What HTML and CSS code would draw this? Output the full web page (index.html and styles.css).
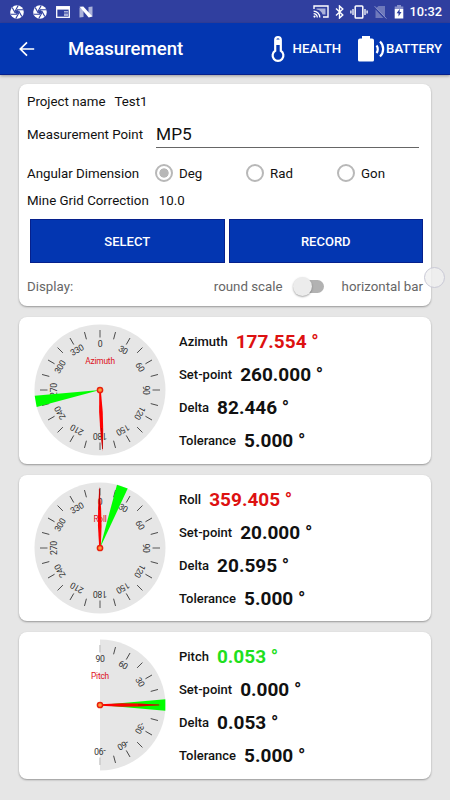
FILE: index.html
```html
<!DOCTYPE html>
<html lang="en">
<head>
  <meta charset="UTF-8" />
  <meta name="viewport" content="width=device-width, initial-scale=1.0"/>
  <title>Measurement</title>
  <link rel="stylesheet" href="styles.css">
</head>
<body>

  <!-- Status bar -->
  <div class="status-bar">
    <div class="status-left">
      <svg width="14" height="14" viewBox="0 0 14 14"><circle cx="7" cy="7" r="6.8" fill="#fff"/><g stroke="#303f9f" stroke-width="1.1"><path d="M5.2 6L8.2 .6M7 4.7h6M8.8 6l3 5.4M8.8 8l-3 5.4M7 9.3H1M5.2 8l-3-5.4"/></g><circle cx="7" cy="7" r="2" fill="#303f9f"/></svg>
      <svg width="14" height="14" viewBox="0 0 14 14"><circle cx="7" cy="7" r="6.8" fill="#fff"/><g stroke="#303f9f" stroke-width="1.1"><path d="M5.2 6L8.2 .6M7 4.7h6M8.8 6l3 5.4M8.8 8l-3 5.4M7 9.3H1M5.2 8l-3-5.4"/></g><circle cx="7" cy="7" r="2" fill="#303f9f"/></svg>
      <svg width="14" height="12" viewBox="0 0 14 12"><rect x=".7" y=".7" width="12.6" height="10.6" fill="none" stroke="#fff" stroke-width="1.3"/><path d="M1 1h12v2.600H1z" fill="#fff"/><path d="M2.600 5h4.200v5H2.600z" fill="#303f9f"/><path d="M8 5h4v1.500H8zM8 7.500h4V10H8z" fill="#a9b0d8"/></svg>
      <svg width="14" height="12" viewBox="0 0 14 12"><path d="M.5 1.500L4.500 4v7L.5 11.500zM9.500 1L13.500 .5v10l-4-2z" fill="#aab1da"/><path d="M.5 .8L4.300 .5l9.200 10-3.800 1z" fill="#fff"/></svg>
    </div>
    <div class="status-right">
      <svg width="16" height="13" viewBox="0 0 16 13"><path d="M1 4V1h14v11h-5" fill="none" stroke="#fff" stroke-width="1.400"/><path d="M3.500 3.500h9v6H9.600C9 7 6.600 4.600 3.500 4.400z" fill="#aab1da"/><path d="M.6 6.200c3.500 0 6.200 2.700 6.200 6.200M.6 8.700c2 0 3.700 1.700 3.700 3.700" fill="none" stroke="#fff" stroke-width="1.300"/><circle cx="1.500" cy="11.600" r="1.100" fill="#fff"/></svg>
      <svg class="bluetooth" width="9" height="14" viewBox="0 0 9 14"><path d="M1 3.600l6.800 6.300L4.500 13V1l3.300 3.100L1 10.400" fill="none" stroke="#fff" stroke-width="1.400"/></svg>
      <svg class="vibrate" width="18" height="14" viewBox="0 0 18 14"><rect x="5.200" y="1" width="7.600" height="12" rx=".8" fill="none" stroke="#fff" stroke-width="1.500"/><path d="M3 4v6M15 4v6M.9 5.500v3M17.100 5.500v3" stroke="#fff" stroke-width="1.300"/></svg>
      <svg class="no-sim" width="13" height="14" viewBox="0 0 13 14"><path d="M2 3.300L4.500 1H11v11zM1.500 4.500L9.500 13h-8z" fill="#6f79bb"/><path d="M.6 1.200L12.400 13.600" stroke="#8a93cb" stroke-width="1"/></svg>
      <svg class="charging" width="10" height="14" viewBox="0 0 10 14"><path d="M3 0h4v1.500h2.300V4H.7V1.500H3z" fill="#8991ca"/><path d="M.7 4h8.600v9.500H.7z" fill="#fff"/><path d="M5.800 3.800L2.600 8.200h1.900v3.300l3-4.600H5.600z" fill="#303f9f"/></svg>
      <span class="clock">10:32</span>
    </div>
  </div>

  <!-- Toolbar -->
  <div class="toolbar">
    <svg class="back" width="16" height="16" viewBox="0 0 16 16"><path d="M15.200 8H1.500M8 1.300L1.300 8 8 14.700" fill="none" stroke="#fff" stroke-width="1.700"/></svg>
    <h1>Measurement</h1>
    <div class="action health">
      <svg width="14" height="26" viewBox="0 0 14 26"><path d="M4.200 14.800V4a2.800 2.800 0 0 1 5.600 0v10.800a5.400 5.400 0 1 1-5.600 0z" fill="none" stroke="#fff" stroke-width="2.200"/><path d="M4.200 3.500h5.600V9H4.200z" fill="#fff"/></svg>
      <span>HEALTH</span>
    </div>
    <div class="action battery">
      <svg width="28" height="26" viewBox="0 0 28 26"><path d="M4 0h8v2.500h2q2 0 2 2V24q0 1.500-1.500 1.500h-13Q0 25.500 0 24V4.500q0-2 2-2h2z" fill="#fff"/><path d="M18.500 9.500c1.700 2 1.700 5.500 0 7.500M22 5.500c4.200 4 4.200 11 0 15" fill="none" stroke="#fff" stroke-width="2.200"/></svg>
      <span>BATTERY</span>
    </div>
  </div>

  <div class="content">
    <!-- Settings -->
    <div class="card settings">
      <div class="row project"><span>Project name</span><span>Test1</span></div>
      <div class="row point"><span>Measurement Point</span><div class="point-input">MP5</div></div>
      <div class="row dimension">
        <span class="dimension-label">Angular Dimension</span>
        <div class="option"><i class="radio checked"></i>Deg</div>
        <div class="option"><i class="radio"></i>Rad</div>
        <div class="option"><i class="radio"></i>Gon</div>
      </div>
      <div class="row grid-correction"><span>Mine Grid Correction</span><span>10.0</span></div>
      <div class="buttons">
        <button>SELECT</button>
        <button>RECORD</button>
      </div>
      <div class="row display">
        <span class="display-label">Display:</span>
        <span>round scale</span>
        <div class="switch"></div>
        <span>horizontal bar</span>
      </div>
      <div class="touch"></div>
    </div>

    <div class="card gauge">
      <svg class="dial" id="azimuth" width="132" height="132" viewBox="-66 -66 132 132"></svg>
      <div class="readings">
        <div class="reading"><span>Azimuth</span><b class="bad">177.554 °</b></div>
        <div class="reading"><span>Set-point</span><b>260.000 °</b></div>
        <div class="reading"><span>Delta</span><b>82.446 °</b></div>
        <div class="reading"><span>Tolerance</span><b>5.000 °</b></div>
      </div>
    </div>

    <div class="card gauge">
      <svg class="dial" id="roll" width="132" height="132" viewBox="-66 -66 132 132"></svg>
      <div class="readings">
        <div class="reading"><span>Roll</span><b class="bad">359.405 °</b></div>
        <div class="reading"><span>Set-point</span><b>20.000 °</b></div>
        <div class="reading"><span>Delta</span><b>20.595 °</b></div>
        <div class="reading"><span>Tolerance</span><b>5.000 °</b></div>
      </div>
    </div>

    <div class="card gauge">
      <svg class="dial" id="pitch" width="132" height="132" viewBox="-66 -66 132 132"></svg>
      <div class="readings">
        <div class="reading"><span>Pitch</span><b class="good">0.053 °</b></div>
        <div class="reading"><span>Set-point</span><b>0.000 °</b></div>
        <div class="reading"><span>Delta</span><b>0.053 °</b></div>
        <div class="reading"><span>Tolerance</span><b>5.000 °</b></div>
      </div>
    </div>
  </div>

  <script>
    // angles are clockwise from the top of the dial
    function drawDial(id, title, value, setPoint, half) {
      let out = half
        ? '<path class="face" d="M0 -65.5A65.5 65.5 0 0 1 0 65.5z"/>'
        : '<circle class="face" r="65.5"/>';
      const last = half ? 180 : 345;

      for (let a = 0; a <= last; a += 15) {
        const edge = half && a % 180 === 0 ? " edge" : "";
        out += `<path class="tick${edge}" d="M0 -60V-52.5" transform="rotate(${a})"/>`;
        if (a % 30 === 0) {
          const text = half ? 90 - a : a;
          out += `<text class="mark" y="-43.2" transform="rotate(${a})">${text}</text>`;
        }
      }

      out += `<text class="title" y="-25.8">${title}</text>`;
      out += `<path class="target" d="M0 0L-5.7 -65.3H5.7z" transform="rotate(${setPoint})"/>`;
      out += `<g transform="rotate(${value})"><path class="needle" d="M-.8 0L-1.8 -22L-1.5 -40L0 -61.5L1.5 -40L1.8 -22L.8 0z"/><path class="needle-line" d="M0 -38V-59"/></g>`;
      out += '<circle class="hub" r="2.6"/>';
      document.getElementById(id).innerHTML = out;
    }

    drawDial("azimuth", "Azimuth", 177.554, 260, false);
    drawDial("roll", "Roll", 359.405, 20, false);
    drawDial("pitch", "Pitch", 90 - 0.053, 90, true);
  </script>
</body>
</html>
```
FILE: styles.css
```css
* {
  box-sizing: border-box;
}

body {
  margin: 0;
  height: 800px;
  overflow: hidden;
  font-family: Roboto, "Liberation Sans", sans-serif;
  font-size: 13.3px;
  color: #111;
  background: #e6e6e6;
}

svg {
  display: block;
  flex: none;
}

.status-bar {
  display: flex;
  justify-content: space-between;
  align-items: center;
  height: 23px;
  padding: 0 8px 0 10px;
  background: #303f9f;
  color: #fff;
}

.status-left,
.status-right {
  display: flex;
  align-items: center;
}

.status-left {
  gap: 9px;
}

.bluetooth {
  margin-left: 6px;
}

.vibrate {
  margin-left: 6px;
}

.no-sim {
  margin-left: 6px;
}

.charging {
  margin-left: 7px;
}

.clock {
  margin-left: 6px;
  font-size: 12.8px;
  font-weight: 500;
}

.toolbar {
  display: flex;
  align-items: center;
  height: 52px;
  padding: 0 8px 0 19px;
  background: #0336b1;
  border-bottom: 1px solid #06208c;
  box-shadow: 0 1px 3px rgba(0, 0, 0, 0.35);
  color: #fff;
}

h1 {
  flex: 1;
  margin: 0 0 0 33px;
  font-size: 18.6px;
  font-weight: 500;
}

.action {
  display: flex;
  align-items: center;
  font-size: 13.2px;
  font-weight: 500;
}

.health {
  gap: 8px;
}

.battery {
  margin-left: 17px;
}

.content {
  display: flex;
  flex-direction: column;
  gap: 11px;
  padding: 9px 19px;
}

.card {
  background: #fff;
  border-radius: 8px;
  box-shadow: 0 1px 2px rgba(0, 0, 0, 0.35);
}

.settings {
  position: relative;
  height: 222px;
  padding: 0 8px;
}

.row {
  display: flex;
  align-items: center;
}

.project {
  height: 34px;
  gap: 9px;
}

.point {
  height: 32px;
  gap: 13px;
}

.point-input {
  flex: 1;
  height: 28px;
  margin-right: 4px;
  border-bottom: 1px solid #666;
  font-size: 17.3px;
  line-height: 28px;
}

.dimension {
  height: 42px;
  padding-top: 4px;
}

.dimension-label {
  flex: none;
  width: 128px;
}

.option {
  display: flex;
  flex: none;
  align-items: center;
  gap: 6px;
  width: 91px;
}

.radio {
  width: 18px;
  height: 18px;
  border: 2px solid #b8b8b8;
  border-radius: 50%;
}

.checked {
  background: radial-gradient(circle, #b8b8b8 4.3px, #fff 5px);
}

.grid-correction {
  height: 17px;
  gap: 10px;
}

.buttons {
  display: flex;
  gap: 4px;
  margin: 10px 0 0 3px;
}

button {
  flex: 1;
  height: 44px;
  padding: 0;
  border: 1px solid #06208c;
  background: #0336b1;
  color: #fff;
  font-family: inherit;
  font-size: 13px;
  font-weight: 500;
}

.display {
  height: 20px;
  margin-top: 13px;
  color: #666;
}

.display-label {
  flex: 1;
}

.switch {
  position: relative;
  width: 28px;
  height: 13px;
  margin: 0 18px 0 13px;
  border-radius: 7px;
  background: #b2b2b2;
}

.switch::before {
  content: "";
  position: absolute;
  left: -3px;
  top: -3px;
  width: 19px;
  height: 19px;
  border-radius: 50%;
  background: #ececec;
  box-shadow: 0 1px 2px rgba(0, 0, 0, 0.35);
}

/* touch indicator, drawn over the card edge */
.touch {
  position: absolute;
  right: -14px;
  top: 183px;
  width: 21px;
  height: 21px;
  border: 1px solid #c9c9d6;
  border-radius: 50%;
  background: rgba(240, 240, 240, 0.8);
}

.gauge {
  display: flex;
  align-items: center;
  height: 146.5px;
  padding-left: 15px;
}

.readings {
  margin-left: 13px;
  padding-top: 2px;
}

.reading {
  display: flex;
  align-items: center;
  gap: 8px;
  height: 32.9px;
  font-size: 13px;
  font-weight: 500;
}

.reading b {
  font-size: 19px;
  font-weight: 700;
}

.reading .bad {
  color: #dd1111;
}

.reading .good {
  color: #1fe01f;
}

.face {
  fill: #e6e6e6;
}

.tick {
  stroke: #333;
  stroke-width: 0.8;
}

.edge {
  stroke: #ccc;
  stroke-width: 1.6;
}

.mark,
.title {
  font-size: 8.7px;
  letter-spacing: -0.3px;
  text-anchor: middle;
  fill: #333;
}

.title {
  font-size: 8.4px;
  letter-spacing: -0.2px;
  fill: #dd1122;
}

.target {
  fill: #0f0;
}

.needle {
  fill: #f00;
}

.needle-line {
  stroke: #a00;
  stroke-width: 0.8;
}

.hub {
  fill: #ff9a3c;
  stroke: #e8200c;
  stroke-width: 1.5;
}
```
